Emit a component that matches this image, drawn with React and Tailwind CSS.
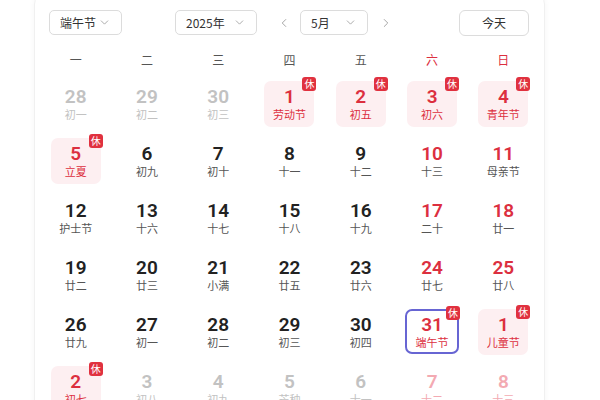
import React from 'react';
import { ChevronDown, ChevronLeft, ChevronRight } from 'lucide-react';

const weekdays = ['一', '二', '三', '四', '五', '六', '日'];

// [day, lunar, flags] flags: o = other month, h = holiday (休), s = selected
const rows = [
    [[28, '初一', 'o'], [29, '初二', 'o'], [30, '初三', 'o'], [1, '劳动节', 'h'], [2, '初五', 'h'], [3, '初六', 'h'], [4, '青年节', 'h']],
    [[5, '立夏', 'h'], [6, '初九'], [7, '初十'], [8, '十一'], [9, '十二'], [10, '十三'], [11, '母亲节']],
    [[12, '护士节'], [13, '十六'], [14, '十七'], [15, '十八'], [16, '十九'], [17, '二十'], [18, '廿一']],
    [[19, '廿二'], [20, '廿三'], [21, '小满'], [22, '廿五'], [23, '廿六'], [24, '廿七'], [25, '廿八']],
    [[26, '廿九'], [27, '初一'], [28, '初二'], [29, '初三'], [30, '初四'], [31, '端午节', 'hs'], [1, '儿童节', 'h']],
    [[2, '初七', 'h'], [3, '初八', 'o'], [4, '初九', 'o'], [5, '芒种', 'o'], [6, '十一', 'o'], [7, '十二', 'o'], [8, '十三', 'o']],
];

const Select = ({ label, className }) => (
    <div className={`h-[25px] flex items-center justify-between border border-[#dcdcdc] rounded-[5px] px-[10px] text-[12px] text-[#333] ${className}`}>
        <span>{label}</span>
        <ChevronDown size={13} strokeWidth={1.5} className="text-[#999]" />
    </div>
);

const DayCell = ({ day, lunar, flags = '', col }) => {
    const other = flags.includes('o');
    const holiday = flags.includes('h');
    const selected = flags.includes('s');
    const weekend = col >= 5;

    let numColor = 'text-[#222]';
    let lunarColor = 'text-[#555]';
    if (other) {
        numColor = weekend ? 'text-[#f3aab2]' : 'text-[#c2c2c2]';
        lunarColor = weekend ? 'text-[#f3aab2]' : 'text-[#c2c2c2]';
    } else if (holiday) {
        numColor = 'text-[#dc2f3f]';
        lunarColor = 'text-[#dc2f3f]';
    } else if (weekend) {
        numColor = 'text-[#dc2f3f]';
    }

    const box = selected
        ? 'w-[54px] h-[45px] border-2 border-[#6765d3] bg-white'
        : holiday
            ? 'w-[50px] h-[46px] bg-[#fdeff1]'
            : 'w-[50px] h-[46px]';

    return (
        <div className="h-[57px] flex items-center justify-center">
            <div className={`relative rounded-[7px] flex flex-col items-center justify-center ${box}`}>
                <span className={`text-[19px] leading-[19px] font-semibold ${numColor}`} style={{ fontFamily: 'Roboto, sans-serif' }}>{day}</span>
                <span className={`text-[11px] leading-[13px] mt-[2px] ${lunarColor}`}>{lunar}</span>
                {holiday && (
                    <span className={`absolute ${selected ? '-top-[5px] -right-[3px]' : '-top-[4px] -right-[2px]'} w-[14px] h-[14px] rounded-[3px] bg-[#e0313f] text-white text-[10px] leading-[14px] text-center`}>休</span>
                )}
            </div>
        </div>
    );
};

export default function App() {
    return (
        <div className="w-[600px] h-[400px] overflow-hidden bg-white" style={{ fontFamily: '"Noto Sans CJK SC", "Noto Sans", sans-serif' }}>
            <div className="ml-[34px] mt-[-6px] w-[511px] rounded-[10px] border border-[#f0f0f0] shadow-[0_0_6px_rgba(0,0,0,0.04)] px-[5px] pt-[15px] pb-4">
                <div className="flex items-center h-[25px]">
                    <Select label="端午节" className="ml-[9px] w-[73px]" />
                    <Select label="2025年" className="ml-[53px] w-[82px]" />
                    <ChevronLeft size={14} strokeWidth={1.5} className="ml-[20px] text-[#999]" />
                    <Select label="5月" className="ml-[9px] w-[68px]" />
                    <ChevronRight size={14} strokeWidth={1.5} className="ml-[11px] text-[#999]" />
                    <button className="ml-[66px] w-[70px] h-[26px] border border-[#dcdcdc] rounded-[6px] text-[12px] text-[#333]">今天</button>
                </div>
                <div className="grid grid-cols-7 h-[40px] items-center pt-[10px]">
                    {weekdays.map((w, i) => (
                        <div key={w} className={`text-center text-[12px] ${i >= 5 ? 'text-[#dc2f3f]' : 'text-[#555]'}`}>{w}</div>
                    ))}
                </div>
                {rows.map((row, r) => (
                    <div key={r} className="grid grid-cols-7">
                        {row.map(([day, lunar, flags], c) => (
                            <DayCell key={c} day={day} lunar={lunar} flags={flags} col={c} />
                        ))}
                    </div>
                ))}
            </div>
        </div>
    );
}
